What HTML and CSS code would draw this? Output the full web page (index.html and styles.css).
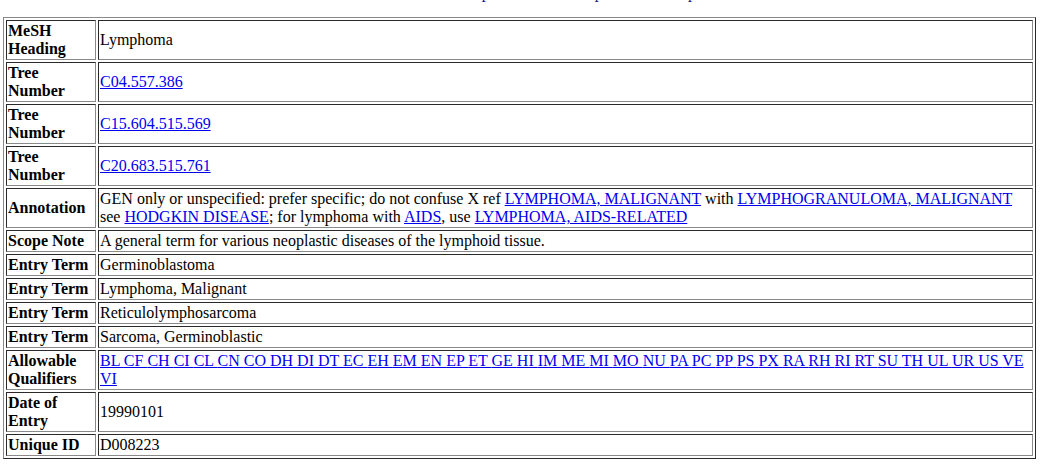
FILE: index.html
```html
<!DOCTYPE html>
<html lang="en">
<head>
  <meta charset="UTF-8">
  <title>MeSH Descriptor Data – Lymphoma</title>
  <link rel="stylesheet" href="styles.css">
</head>
<body>
  <div class="nav">
    <a href="#">Descriptor</a>
    <a href="#">Help</a>
    <a href="#">Map</a>
  </div>

  <table class="mesh">
    <tr>
      <th>MeSH Heading</th>
      <td>Lymphoma</td>
    </tr>
    <tr>
      <th>Tree Number</th>
      <td><a href="#">C04.557.386</a></td>
    </tr>
    <tr>
      <th>Tree Number</th>
      <td><a href="#">C15.604.515.569</a></td>
    </tr>
    <tr>
      <th>Tree Number</th>
      <td><a href="#">C20.683.515.761</a></td>
    </tr>
    <tr>
      <th>Annotation</th>
      <td>GEN only or unspecified: prefer specific; do not confuse X ref <a href="#">LYMPHOMA, MALIGNANT</a> with <a href="#">LYMPHOGRANULOMA, MALIGNANT</a> see <a href="#">HODGKIN DISEASE</a>; for lymphoma with <a href="#">AIDS</a>, use <a href="#">LYMPHOMA, AIDS-RELATED</a></td>
    </tr>
    <tr>
      <th>Scope Note</th>
      <td>A general term for various neoplastic diseases of the lymphoid tissue.</td>
    </tr>
    <tr>
      <th>Entry Term</th>
      <td>Germinoblastoma</td>
    </tr>
    <tr>
      <th>Entry Term</th>
      <td>Lymphoma, Malignant</td>
    </tr>
    <tr>
      <th>Entry Term</th>
      <td>Reticulolymphosarcoma</td>
    </tr>
    <tr>
      <th>Entry Term</th>
      <td>Sarcoma, Germinoblastic</td>
    </tr>
    <tr>
      <th>Allowable Qualifiers</th>
      <td class="qualifiers"><a href="#">BL </a><a href="#">CF </a><a href="#">CH </a><a href="#">CI </a><a href="#">CL </a><a href="#">CN </a><a href="#">CO </a><a href="#">DH </a><a href="#">DI </a><a href="#">DT </a><a href="#">EC </a><a href="#">EH </a><a href="#">EM </a><a href="#">EN </a><a href="#">EP </a><a href="#">ET </a><a href="#">GE </a><a href="#">HI </a><a href="#">IM </a><a href="#">ME </a><a href="#">MI </a><a href="#">MO </a><a href="#">NU </a><a href="#">PA </a><a href="#">PC </a><a href="#">PP </a><a href="#">PS </a><a href="#">PX </a><a href="#">RA </a><a href="#">RH </a><a href="#">RI </a><a href="#">RT </a><a href="#">SU </a><a href="#">TH </a><a href="#">UL </a><a href="#">UR </a><a href="#">US </a><a href="#">VE </a><a href="#">VI</a></td>
    </tr>
    <tr>
      <th>Date of Entry</th>
      <td>19990101</td>
    </tr>
    <tr>
      <th>Unique ID</th>
      <td>D008223</td>
    </tr>
  </table>
</body>
</html>
```

FILE: styles.css
```css
body {
  margin: 0 5px 0 3px;
  font-family: "Liberation Serif", "Times New Roman", serif;
  font-size: 16px;
  line-height: 18px;
  color: #000;
  background: #fff;
}
a {
  color: #0000ee;
}
.nav {
  display: flex;
  gap: 64px;
  height: 18px;
  margin-top: -16px;
  padding-left: 437px;
}
.nav a {
  color: #1a1a80;
  text-decoration: none;
}
.mesh {
  width: 100%;
  margin-top: 15px;
  border-collapse: separate;
  border-spacing: 2px;
  border: 1px solid;
  border-color: #8a8a8a #2a2a2a #2a2a2a #8a8a8a;
}
.mesh th,
.mesh td {
  padding: 1px;
  border: 1px solid;
  border-color: #2a2a2a #8a8a8a #8a8a8a #2a2a2a;
  vertical-align: middle;
}
.mesh th {
  box-sizing: border-box;
  width: 90px;
  text-align: left;
  font-weight: bold;
}
```
